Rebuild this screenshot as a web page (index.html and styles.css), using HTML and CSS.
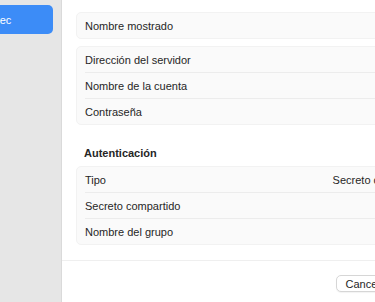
FILE: index.html
```html
<!DOCTYPE html>
<html>
<head>
    <meta charset="UTF-8">
    <title>Añadir VPN</title>
    <link rel="stylesheet" href="styles.css">
</head>
<body>
    <div class="window">
        <aside class="sidebar">
            <div class="sidebar-item active">IPSec</div>
        </aside>

        <main class="pane">
            <div class="content">
                <div class="card">
                    <div class="row"><span class="label">Nombre mostrado</span></div>
                </div>

                <div class="card">
                    <div class="row"><span class="label">Dirección del servidor</span></div>
                    <div class="row"><span class="label">Nombre de la cuenta</span></div>
                    <div class="row"><span class="label">Contraseña</span></div>
                </div>

                <h2 class="section-title">Autenticación</h2>
                <div class="card">
                    <div class="row">
                        <span class="label">Tipo</span>
                        <span class="value">Secreto compartido</span>
                    </div>
                    <div class="row"><span class="label">Secreto compartido</span></div>
                    <div class="row"><span class="label">Nombre del grupo</span></div>
                </div>
            </div>

            <footer class="footer">
                <button class="btn">Cancelar</button>
                <button class="btn btn-primary">Crear</button>
            </footer>
        </main>
    </div>
</body>
</html>
```

FILE: styles.css
```css
* {
    margin: 0;
    padding: 0;
    box-sizing: border-box;
}

body {
    font-family: 'Liberation Sans', Arial, sans-serif;
    font-size: 11px;
    color: #262626;
    background: #ffffff;
    overflow: hidden;
}

.window {
    display: flex;
    width: 451px;
    height: 302px;
}

.sidebar {
    width: 62px;
    flex-shrink: 0;
    background: #e6e6e6;
    border-right: 1px solid #dadada;
    padding-top: 5px;
}

.sidebar-item {
    margin-left: -30px;
    margin-right: 8px;
    height: 29px;
    padding-left: 12px;
    line-height: 30px;
    border-radius: 5px;
    white-space: nowrap;
}

.sidebar-item.active {
    background: #3c8cf7;
    color: #ffffff;
    font-weight: 500;
}

.pane {
    flex: 1;
    display: flex;
    flex-direction: column;
    background: #ffffff;
}

.content {
    padding: 12px 14px 0;
    display: flex;
    flex-direction: column;
    gap: 7px;
}

.card {
    background: #fafafa;
    border: 1px solid #f2f2f2;
    border-radius: 5px;
}

.row {
    display: flex;
    justify-content: space-between;
    align-items: center;
    height: 26px;
    margin: 0 8px;
    border-top: 1px solid #ececec;
}

.row:first-child {
    border-top: none;
    height: 25px;
}

.label {
    color: #262626;
}

.value {
    color: #262626;
    white-space: nowrap;
}

.section-title {
    font-size: 11px;
    font-weight: bold;
    color: #262626;
    padding: 14px 8px 0;
    line-height: 14px;
    margin-bottom: -1px;
}

.footer {
    margin-top: 15px;
    border-top: 1px solid #efefef;
    display: flex;
    justify-content: flex-end;
    gap: 6px;
    padding: 14px 1px 0 14px;
}

.btn {
    font-family: inherit;
    font-size: 11px;
    color: #262626;
    background: #ffffff;
    border: 1px solid #d6d6d6;
    border-radius: 5px;
    padding: 1px 8px;
    height: 17px;
    box-shadow: 0 1px 1px rgba(0, 0, 0, 0.05);
}

.btn-primary {
    min-width: 40px;
}
```
